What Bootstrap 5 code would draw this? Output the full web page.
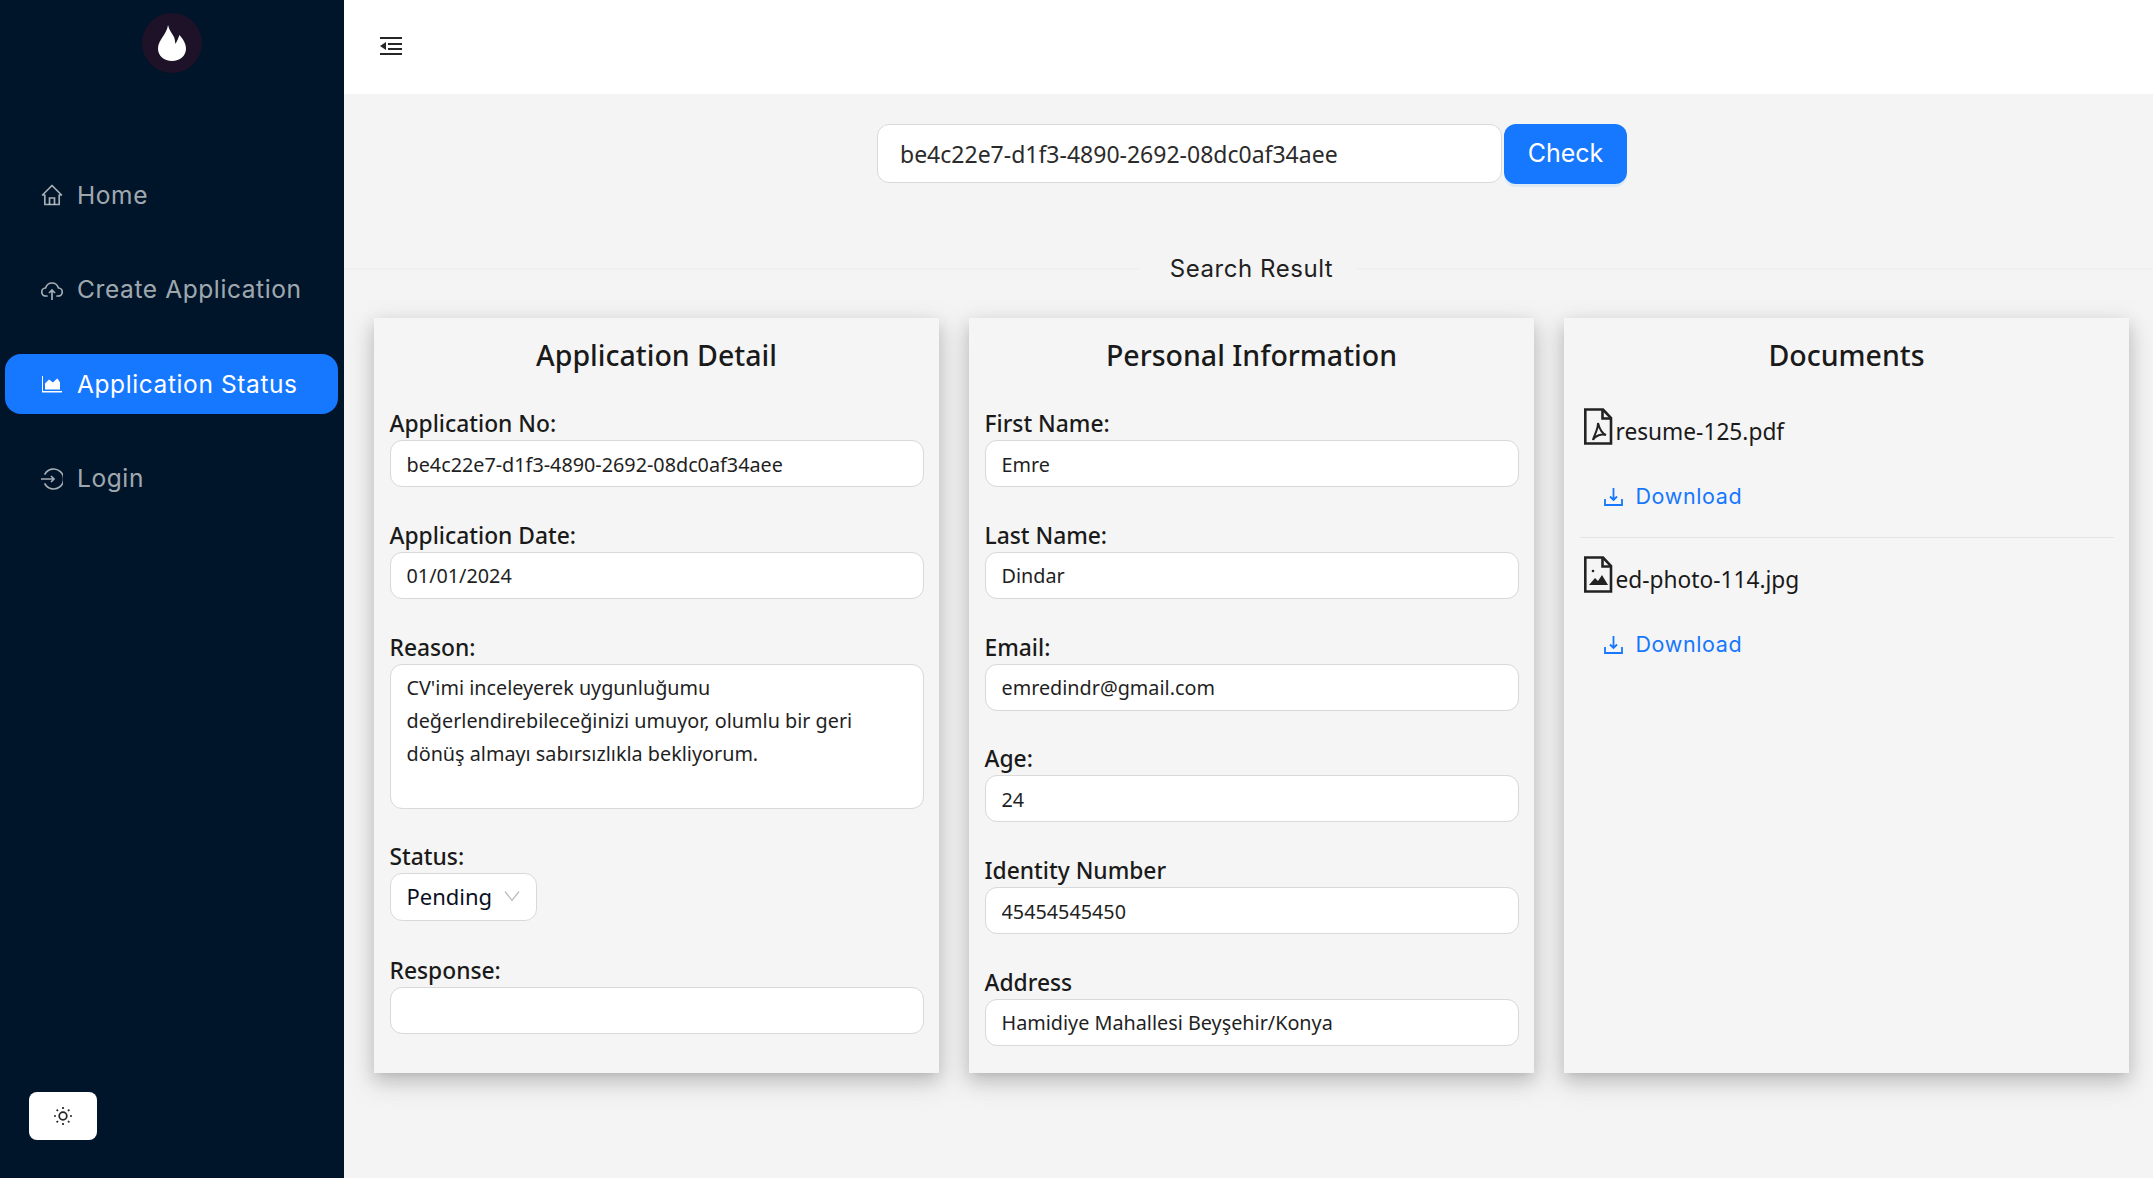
<!DOCTYPE html>
<html lang="en">
<head>
<meta charset="utf-8">
<title>Application Status</title>
<link href="https://cdn.jsdelivr.net/npm/bootstrap@5.3.0/dist/css/bootstrap.min.css" rel="stylesheet">
<style>
body{background:#f4f4f4;font-family:"Noto Sans","Liberation Sans",sans-serif;color:#1a1a1a;height:1178px;overflow:hidden}
.app-shell{height:1178px}
.side{width:344px;flex:0 0 344px;background:#001529;padding:13px 6px 38px 5px}
.logo-disc{width:60px;height:60px;background:#1d1228;margin:0 auto 92px}
.side-link{font-family:Inter,sans-serif;font-size:24.5px;letter-spacing:.6px;color:rgba(255,255,255,.65);height:60px;padding:0 0 0 36px;margin-bottom:34.5px;border-radius:16px;gap:14px}
.side-link:hover{color:rgba(255,255,255,.65)}
.side-link.is-on,.side-link.is-on:hover{background:#1677ff;color:#fff}
.side-link svg{width:22px;height:22px;flex:none}
.theme-btn{width:68px;height:48px;margin:auto 0 0 24px;background:#fff;border-radius:8px;border:0;padding:0}
.topbar{height:94px;background:#fff;padding:0 0 2px 35px}
.search-row{padding-top:30px;gap:2px;padding-left:7px}
.search-input{width:625px;height:59px;border-radius:12px;border:1px solid #d9d9d9;font-size:23px;padding:1px 22px 0;color:#2b2b2b;background:#fff}
.check-btn{width:123px;height:60px;background:#1677ff;border:0;border-radius:12px;color:#fff;font-family:Inter,sans-serif;font-size:25px;padding:0;box-shadow:0 3px 0 rgba(5,145,255,.1)}
.check-btn:hover{background:#1677ff;color:#fff}
.result-sep{margin-top:69px;height:32px;gap:24px;font-family:Inter,sans-serif;font-size:24px;letter-spacing:.55px;color:#1f1f1f}
.sep-label{padding-left:6px}
.sep-line{flex:1;height:2px;background:#f0f0f0}
.cols{display:grid;grid-template-columns:repeat(3,565px);gap:30px;padding-left:30px;margin-top:33px}
.panel{background:#f5f5f5;height:755px;padding:21px 15.5px 0;box-shadow:0 9px 28px 8px rgba(0,0,0,.05),0 6px 16px 0 rgba(0,0,0,.08),0 3px 6px -4px rgba(0,0,0,.12),0 8px 20px rgba(0,0,0,.13)}
.panel-title{font-size:28.5px;line-height:33px;font-weight:500;text-align:center;margin-bottom:35px;color:#1a1a1a}
.fld{margin-bottom:31.75px}
.fld label{display:block;font-size:22.8px;line-height:33px;font-weight:500;color:#1a1a1a}
.fld .form-control{height:47px;border:1px solid #d9d9d9;border-radius:12px;font-size:19.8px;padding:1px 16px 0;color:#1f1f1f;box-shadow:none}
.fld textarea.form-control{height:145px;line-height:33px;padding:6px 16px 0;resize:none;overflow:hidden}
.status-pick{width:147px;height:48px;background:#fff;border:1px solid #d9d9d9;border-radius:12px;padding:0 16px 2px;font-size:22px;color:#0b1024;margin-bottom:33px}
.doc-list{padding-top:2px}
.doc-name{font-size:22.7px;color:#1a1a1a;height:36px;gap:3px;padding-left:3px}
.doc-name svg{width:30px;height:37px;flex:none;margin-top:-1px}
.doc-name span{line-height:36px;position:relative;top:5px}
.dl-link{font-family:Inter,sans-serif;font-size:21.5px;letter-spacing:.6px;color:#1677ff;text-decoration:none;padding-left:24px;gap:13px;height:36px;margin-top:33px}
.dl-link:hover{color:#1677ff}
.dl-link svg{width:19px;height:19px;flex:none}
.doc-rule{margin:23px 0 19px;border-top:1px solid #e4e4e4;opacity:1}
</style>
</head>
<body>
<div class="app-shell d-flex">
  <aside class="side d-flex flex-column">
    <div class="logo-disc rounded-circle d-flex align-items-center justify-content-center">
      <svg width="28" height="36" viewBox="0 0 28 36" aria-hidden="true"><path fill="#fff" d="M10 0c1 5 4 8 6 12 .8 2 1 4.500 1.500 7C19 16 20.500 13 21.500 10c3.200 3.500 6.500 8.500 6.500 13.500C28 31 22 36 14 36S0 31 0 23.500C0 15 9 9 10 0z"/></svg>
    </div>
    <nav class="nav flex-column">
      <a class="nav-link side-link d-flex align-items-center" href="#">
        <svg viewBox="0 0 22 22" fill="none" stroke="currentColor" stroke-width="1.7" aria-hidden="true"><path d="M1.500 11 11 1.500 20.500 11h-2.300v9.500H3.800V11z" stroke-linejoin="round"/><path d="M8.500 20.500V14h5v6.500"/></svg>
        Home</a>
      <a class="nav-link side-link d-flex align-items-center" href="#">
        <svg viewBox="0 0 22 22" fill="none" stroke="currentColor" stroke-width="1.7" aria-hidden="true"><path d="M6 17H5a4 4 0 0 1-.5-8C5.500 6 8 4 11 4s5.500 2 6.500 5a4 4 0 0 1-.5 8h-1" stroke-linecap="round"/><path d="M11 21V11M8 14l3-3 3 3"/></svg>
        Create Application</a>
      <a class="nav-link side-link is-on d-flex align-items-center" href="#">
        <svg viewBox="0 0 22 22" fill="#fff" aria-hidden="true"><path d="M2 3v15h19v1.500H1V3z"/><path d="M4 16.500v-6l4-4 4 3 3.500-3.500 1-.5 2.500 4v7z"/></svg>
        Application Status</a>
      <a class="nav-link side-link d-flex align-items-center" href="#">
        <svg viewBox="0 0 22 22" fill="none" stroke="currentColor" stroke-width="1.7" aria-hidden="true"><path d="M4 6a10 10 0 1 1 0 10" stroke-linecap="round"/><path d="M0 11h13M10 8l3 3-3 3"/></svg>
        Login</a>
    </nav>
    <button class="theme-btn d-flex align-items-center justify-content-center" type="button" aria-label="Theme">
      <svg width="18" height="18" viewBox="0 0 18 18" fill="none" stroke="#262626" stroke-width="1.7" aria-hidden="true"><circle cx="9" cy="9" r="3.800"/><path d="M9 0v2M9 16v2M0 9h2M16 9h2M2.600 2.600l1.400 1.400M14 14l1.400 1.400M2.600 15.400 4 14M14 4l1.400-1.400"/></svg>
    </button>
  </aside>
  <main class="flex-grow-1">
    <div class="topbar d-flex align-items-center">
      <svg width="23" height="20" viewBox="0 0 23 20" fill="#262626" aria-hidden="true"><path d="M1 1h22v2H1zM9 7h14v2H9zM9 12h14v2H9zM1 17h22v2H1zM1 10l6-4v8z"/></svg>
    </div>
    <div class="search-row d-flex justify-content-center">
      <input class="search-input" type="text" value="be4c22e7-d1f3-4890-2692-08dc0af34aee" aria-label="Application number">
      <button class="btn check-btn" type="button">Check</button>
    </div>
    <div class="result-sep d-flex align-items-center">
      <span class="sep-line"></span><span class="sep-label">Search Result</span><span class="sep-line"></span>
    </div>
    <div class="cols">
      <section class="panel">
        <h2 class="panel-title">Application Detail</h2>
        <div class="fld"><label>Application No:</label><input class="form-control" value="be4c22e7-d1f3-4890-2692-08dc0af34aee"></div>
        <div class="fld"><label>Application Date:</label><input class="form-control" value="01/01/2024"></div>
        <div class="fld"><label>Reason:</label><textarea class="form-control">CV'imi inceleyerek uygunluğumu
değerlendirebileceğinizi umuyor, olumlu bir geri
dönüş almayı sabırsızlıkla bekliyorum.</textarea></div>
        <div class="fld mb-0"><label>Status:</label></div>
        <div class="status-pick d-flex align-items-center justify-content-between">Pending
          <svg width="16" height="12" viewBox="0 0 16 12" fill="none" stroke="#bfbfbf" stroke-width="1.300" aria-hidden="true"><path d="M1 1.500 8 10.500 15 1.500"/></svg>
        </div>
        <div class="fld"><label>Response:</label><input class="form-control" value=""></div>
      </section>
      <section class="panel">
        <h2 class="panel-title">Personal Information</h2>
        <div class="fld"><label>First Name:</label><input class="form-control" value="Emre"></div>
        <div class="fld"><label>Last Name:</label><input class="form-control" value="Dindar"></div>
        <div class="fld"><label>Email:</label><input class="form-control" value="emredindr@gmail.com"></div>
        <div class="fld"><label>Age:</label><input class="form-control" value="24"></div>
        <div class="fld"><label>Identity Number</label><input class="form-control" value="45454545450"></div>
        <div class="fld"><label>Address</label><input class="form-control" value="Hamidiye Mahallesi Beyşehir/Konya"></div>
      </section>
      <section class="panel">
        <h2 class="panel-title">Documents</h2>
        <div class="doc-list">
          <div class="doc-name d-flex">
            <svg viewBox="0 0 30 37" fill="none" stroke="#222" stroke-width="2.600" aria-hidden="true"><path d="M2.300 1.500H20L28 10v25.500H2.300z"/><path d="M19.500 2v8.500H28"/><path stroke-width="2" d="M15 15c1 4 3 10 8 12-4-1-11 0-13 5 0-3 5-9 5-17z"/></svg>
            <span>resume-125.pdf</span>
          </div>
          <a class="dl-link d-flex align-items-center" href="#">
            <svg viewBox="0 0 19 19" fill="none" stroke="currentColor" stroke-width="1.800" aria-hidden="true"><path d="M1 12v6h17v-6M9.500 1v12M6 9.500l3.500 3.500L13 9.500"/></svg>
            Download</a>
          <hr class="doc-rule">
          <div class="doc-name d-flex">
            <svg viewBox="0 0 30 37" fill="none" stroke="#222" stroke-width="2.600" aria-hidden="true"><path d="M2.300 1.500H20L28 10v25.500H2.300z"/><path d="M19.500 2v8.500H28"/><circle cx="10" cy="15" r="1.300" fill="#222" stroke="none"/><path fill="#222" stroke="none" d="M6 29l6-7 3 3 4-6 6 10z"/></svg>
            <span>ed-photo-114.jpg</span>
          </div>
          <a class="dl-link d-flex align-items-center" href="#">
            <svg viewBox="0 0 19 19" fill="none" stroke="currentColor" stroke-width="1.800" aria-hidden="true"><path d="M1 12v6h17v-6M9.500 1v12M6 9.500l3.500 3.500L13 9.500"/></svg>
            Download</a>
        </div>
      </section>
    </div>
  </main>
</div>
<script src="https://cdn.jsdelivr.net/npm/bootstrap@5.3.0/dist/js/bootstrap.bundle.min.js"></script>
</body>
</html>
